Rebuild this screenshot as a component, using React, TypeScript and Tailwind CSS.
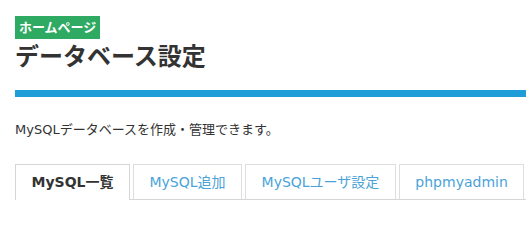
import React from "react";

const tabs = [
  { label: "MySQL一覧", active: true },
  { label: "MySQL追加", active: false },
  { label: "MySQLユーザ設定", active: false },
  { label: "phpmyadmin", active: false },
];

export default function App() {
  return (
    <div
      className="w-[526px] h-[223px] bg-white pl-[15px] pt-[15px] overflow-hidden text-[#333]"
      style={{ fontFamily: '"DejaVu Sans", "Noto Sans CJK JP", sans-serif' }}
    >
      <div className="inline-block bg-[#2eaa62] text-white font-bold text-[13px] leading-[23px] h-[23px] px-[4px] whitespace-nowrap">
        ホームページ
      </div>
      <h1 className="mt-[3px] text-[24px] leading-[30px] font-bold text-[#333]">
        データベース設定
      </h1>
      <div className="mt-[18px] h-[7px] bg-[#1e9dd8]" />
      <p className="mt-[23px] text-[13px] leading-[20px] text-[#333] whitespace-nowrap">
        MySQLデータベースを作成・管理できます。
      </p>
      <ul className="mt-[24px] flex items-start border-b border-[#d6d6d6]">
        {tabs.map((t) => (
          <li
            key={t.label}
            className={
              t.active
                ? "shrink-0 whitespace-nowrap mr-[3px] -mb-px h-[36px] border-t border-x border-[#d6d6d6] bg-white px-[15.5px] flex items-center text-[14px] font-bold text-[#333]"
                : "shrink-0 whitespace-nowrap mr-[3px] h-[35px] border-t border-x border-[#dedede] bg-white px-[15.5px] flex items-center text-[14px] text-[#4aa3d8]"
            }
          >
            {t.label}
          </li>
        ))}
      </ul>
    </div>
  );
}
